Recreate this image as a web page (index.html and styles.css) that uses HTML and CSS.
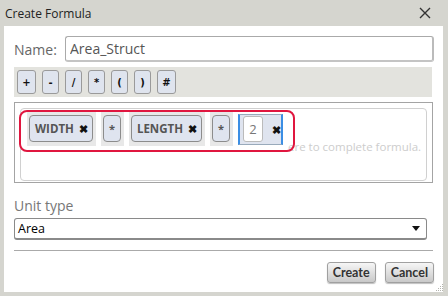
FILE: index.html
```html
<!DOCTYPE html>
<html lang="en">
<head>
  <meta charset="UTF-8" />
  <title>Create Formula</title>
  <link rel="stylesheet" href="styles.css">
</head>
<body>
  <div class="dialog">
    <div class="titlebar">
      <span class="title">Create Formula</span>
      <svg class="close" width="12" height="12" viewBox="0 0 12 12"><path d="M1 1L11 11M11 1L1 11" stroke="#333" stroke-width="1.4" fill="none"/></svg>
    </div>
    <div class="content">
      <div class="name-row">
        <label class="name-label" for="name">Name:</label>
        <input class="name-input" id="name" type="text" value="Area_Struct" />
      </div>

      <div class="toolbar">
        <button class="op op-wide">+</button>
        <button class="op">-</button>
        <button class="op">/</button>
        <button class="op">*</button>
        <button class="op">(</button>
        <button class="op">)</button>
        <button class="op op-wide">#</button>
      </div>

      <div class="formula">
        <div class="formula-inner">
          <div class="tokens">
            <div class="token-wrap"><span class="token">WIDTH <b class="x">&#x2716;</b></span></div>
            <div class="token-wrap"><span class="token token-op">*</span></div>
            <div class="token-wrap"><span class="token">LENGTH <b class="x">&#x2716;</b></span></div>
            <div class="token-wrap"><span class="token token-op">*</span></div>
            <div class="token-num">
              <span class="num-box">2</span>
              <b class="x">&#x2716;</b>
            </div>
            <div class="placeholder">ere to complete formula.</div>
          </div>
          <div class="highlight"></div>
        </div>
      </div>

      <div class="unit-label">Unit type</div>
      <div class="select">
        <span>Area</span>
        <svg width="8" height="5" viewBox="0 0 8 5"><path d="M0 0H8L4 5Z" fill="#111"/></svg>
      </div>

      <hr class="divider" />

      <div class="actions">
        <button class="btn">Create</button>
        <button class="btn">Cancel</button>
      </div>
    </div>
    <svg class="grip" width="9" height="9" viewBox="0 0 9 9">
      <g fill="#b4b4ae">
        <rect x="7" y="1" width="1" height="1"/>
        <rect x="5" y="3" width="1" height="1"/><rect x="7" y="3" width="1" height="1"/>
        <rect x="3" y="5" width="1" height="1"/><rect x="5" y="5" width="1" height="1"/><rect x="7" y="5" width="1" height="1"/>
        <rect x="1" y="7" width="1" height="1"/><rect x="3" y="7" width="1" height="1"/><rect x="5" y="7" width="1" height="1"/><rect x="7" y="7" width="1" height="1"/>
      </g>
    </svg>
  </div>
</body>
</html>
```

FILE: styles.css
```css
body {
  margin: 0;
  font-family: "Open Sans", "Noto Sans", sans-serif;
}
.dialog {
  position: relative;
  width: 448px;
  height: 296px;
  box-sizing: border-box;
  background: #d5d5cf;
  padding: 0 5px 4px 4px;
}
.titlebar {
  height: 26px;
  display: flex;
  align-items: center;
  justify-content: space-between;
  padding: 0 12px 0 1px;
}
.title {
  font-size: 12px;
  color: #222;
}
.content {
  background: #fff;
  height: 266px;
  box-sizing: border-box;
  padding: 10px 5px 0 10px;
}
.name-row {
  display: flex;
  align-items: center;
  height: 26px;
}
.name-label {
  width: 51px;
  font-size: 14px;
  color: #666;
}
.name-input {
  flex: 1;
  height: 26px;
  box-sizing: border-box;
  border: 1px solid #aaa;
  border-right: 2px solid #bbb;
  border-bottom: 2px solid #c4c4c4;
  border-radius: 3px;
  padding: 0 4px;
  font-family: inherit;
  font-size: 14px;
  color: #555;
  margin-right: 4px;
}
.toolbar {
  margin-top: 5px;
  margin-right: 6px;
  height: 30px;
  box-sizing: border-box;
  background: #e3e3de;
  padding: 3px;
  display: flex;
  gap: 6px;
}
.op {
  width: 17px;
  height: 24px;
  padding: 0;
  border: 1px solid #9a9a9a;
  border-radius: 3px;
  background: #dfe4ee;
  font-family: "DejaVu Sans", sans-serif;
  font-weight: bold;
  font-size: 10px;
  color: #111;
}
.op-wide {
  width: 19px;
}
.formula {
  margin-top: 5px;
  margin-right: 5px;
  height: 81px;
  box-sizing: border-box;
  border: 1px solid #a4a4a4;
  padding: 5px;
}
.formula-inner {
  position: relative;
  height: 69px;
  border: 1px solid #d0d0d0;
  border-radius: 4px;
  padding: 2px 0 0 6px;
}
.tokens {
  display: flex;
  align-items: center;
  gap: 5px;
  height: 36px;
}
.token-wrap {
  background: #e8e8e8;
  padding: 3px 3px 4px 2px;
}
.token {
  display: flex;
  align-items: center;
  gap: 5px;
  height: 27px;
  box-sizing: border-box;
  padding: 0 4px 0 5px;
  border: 1px solid #8c8c8c;
  border-radius: 4px;
  background: #dfe4ef;
  font-weight: bold;
  font-size: 11.5px;
  color: #555;
}
.token-op {
  width: 18px;
  justify-content: center;
  padding: 0;
  font-size: 11px;
}
.x {
  font-size: 11px;
  color: #111;
}
.token-num {
  display: flex;
  align-items: center;
  height: 31px;
  width: 49px;
  box-sizing: border-box;
  background: #dfe4ef;
  border: 1px solid #9ab;
  border-left: 2px solid #3b8ee4;
  border-right: 2px solid #3b8ee4;
  padding-left: 3px;
}
.num-box {
  width: 20px;
  height: 26px;
  box-sizing: border-box;
  background: #fff;
  border: 1px solid #bbb;
  border-radius: 3px;
  display: flex;
  align-items: center;
  justify-content: center;
  font-size: 13px;
  color: #777;
  margin-right: 9px;
}
.placeholder {
  margin-left: auto;
  align-self: flex-end;
  white-space: nowrap;
  margin-right: 8px;
  margin-bottom: -7px;
  font-size: 11.5px;
  color: #cdcdcd;
}
.highlight {
  position: absolute;
  left: -2px;
  top: 1px;
  width: 272px;
  height: 38px;
  border: 2px solid #e0163f;
  border-radius: 8px;
}
.unit-label {
  margin-top: 13px;
  height: 21px;
  font-size: 14px;
  color: #777;
}
.select {
  margin-top: 1px;
  margin-right: 11px;
  height: 22px;
  box-sizing: border-box;
  border: 1px solid #8a8a8a;
  border-bottom-width: 2px;
  border-radius: 3px;
  display: flex;
  align-items: center;
  justify-content: space-between;
  padding: 0 6px 0 3px;
  font-size: 12.5px;
  color: #000;
}
.divider {
  margin: 10px 5px 0 0;
  border: 0;
  border-top: 1px solid #aaa;
}
.actions {
  display: flex;
  justify-content: flex-end;
  gap: 9px;
  margin-top: 11px;
  margin-right: 4px;
}
.btn {
  height: 21px;
  padding: 0 5px;
  border: 1px solid #a0a0a0;
  border-radius: 3px;
  background: linear-gradient(#f6f6f6, #c9c9c9);
  box-shadow: 0 1px 1px rgba(0,0,0,0.25);
  font-family: "Lato", sans-serif;
  font-weight: bold;
  font-size: 12.5px;
  color: #333;
}
.grip {
  position: absolute;
  right: 4px;
  bottom: 4px;
}
```
